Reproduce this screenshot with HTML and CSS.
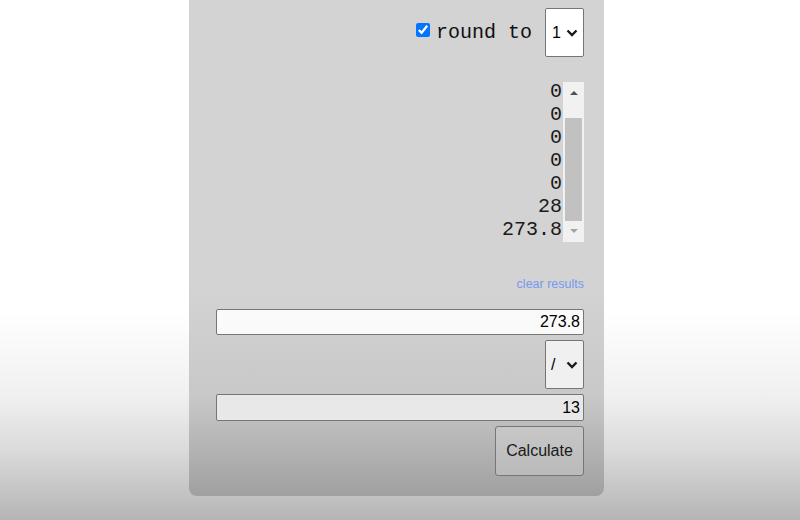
FILE: index.html
```html
<!DOCTYPE html>
<html>
<head>
<meta charset="utf-8">
<link rel="stylesheet" href="styles.css">
</head>
<body>
<div class="page">
  <div class="panel">
    <div class="round-row">
      <label class="round-label"><input type="checkbox" class="chk" checked><span class="round-text">round to</span></label>
      <div class="sel-wrap">
        <select class="sel sel-round"><option>1</option></select>
        <svg class="chev" width="12" height="8" viewBox="0 0 12 8"><path d="M1.5 1.5 L6 6 L10.5 1.5" fill="none" stroke="#1a1a1a" stroke-width="2.4"/></svg>
      </div>
    </div>
    <div class="results">
      <div class="results-text">
        <div>0</div>
        <div>0</div>
        <div>0</div>
        <div>0</div>
        <div>0</div>
        <div>28</div>
        <div>273.8</div>
      </div>
      <div class="scrollbar">
        <div class="sb-top"><span class="tri-up"></span></div>
        <div class="sb-thumb"></div>
        <div class="sb-bottom"><span class="tri-down"></span></div>
      </div>
    </div>
    <div class="clear-row"><a class="clear" href="#">clear results</a></div>
    <input class="num num-a" type="text" value="273.8">
    <div class="op-row">
      <div class="sel-wrap">
        <select class="sel sel-op"><option>/</option></select>
        <svg class="chev" width="12" height="8" viewBox="0 0 12 8"><path d="M1.5 1.5 L6 6 L10.5 1.5" fill="none" stroke="#1a1a1a" stroke-width="2.4"/></svg>
      </div>
    </div>
    <input class="num num-b" type="text" value="13">
    <div class="btn-row"><button class="calc">Calculate</button></div>
  </div>
</div>
</body>
</html>
```
FILE: styles.css
```css
html, body {
  margin: 0;
  padding: 0;
}
body {
  height: 520px;
  overflow: hidden;
  background: linear-gradient(to bottom, #ffffff 0%, #ffffff 60%, #f0f0f0 76%, #dcdcdc 86%, #c0c0c0 96%, #b5b5b5 100%);
  font-family: "Liberation Sans", Arial, sans-serif;
}
.page {
  padding-left: 189px;
}
.panel {
  width: 415px;
  box-sizing: border-box;
  padding: 8px 20px 20px 27px;
  border-radius: 0 0 8px 8px;
  background: linear-gradient(to bottom, #d3d3d3 0%, #d3d3d3 58%, #c8c8c8 80%, #b4b4b4 90%, #a0a0a0 100%);
  display: flex;
  flex-direction: column;
}
.round-row {
  display: flex;
  justify-content: flex-end;
  align-items: center;
  height: 49px;
}
.round-label {
  display: flex;
  align-items: center;
  margin-right: 13px;
}
.chk {
  width: 14px;
  height: 14px;
  margin: 0 6px 5px 0;
}
.round-text {
  font-family: "Liberation Mono", "Courier New", monospace;
  font-size: 20px;
  color: #111;
}
.sel-wrap {
  position: relative;
  display: block;
  width: 39px;
  height: 49px;
}
.chev {
  position: absolute;
  left: 21px;
  top: 21px;
  pointer-events: none;
}
.sel {
  display: block;
  width: 39px;
  height: 49px;
  box-sizing: border-box;
  -webkit-appearance: none;
  appearance: none;
  font-family: "Liberation Sans", Arial, sans-serif;
  font-size: 16px;
  color: #000;
  border: 1px solid #767676;
  border-radius: 2px;
  padding: 0 0 0 6px;
  margin: 0;
}
.sel-round {
  background-color: #ffffff;
}
.sel-op {
  background-color: #f0f0f0;
  padding-left: 5px;
}
.results {
  margin-top: 25px;
  height: 160px;
  display: flex;
  justify-content: flex-end;
}
.results-text {
  font-family: "Liberation Mono", "Courier New", monospace;
  font-size: 20px;
  line-height: 23px;
  color: #1a1a1a;
  text-align: right;
  margin-top: -2px;
  margin-right: 1px;
}
.scrollbar {
  width: 21px;
  height: 160px;
  background: #f1f1f1;
  display: flex;
  flex-direction: column;
  align-items: center;
}
.sb-top {
  height: 36px;
  padding-top: 9px;
  box-sizing: border-box;
}
.sb-thumb {
  width: 17px;
  height: 103px;
  background: #c1c1c1;
}
.sb-bottom {
  height: 21px;
  padding-top: 8px;
  box-sizing: border-box;
}
.tri-up {
  display: block;
  width: 0;
  height: 0;
  border-left: 4px solid transparent;
  border-right: 4px solid transparent;
  border-bottom: 4px solid #505050;
}
.tri-down {
  display: block;
  width: 0;
  height: 0;
  border-left: 4px solid transparent;
  border-right: 4px solid transparent;
  border-top: 4px solid #a3a3a3;
}
.clear-row {
  margin-top: 35px;
  height: 14px;
  display: flex;
  justify-content: flex-end;
}
.clear {
  font-size: 12.5px;
  line-height: 14px;
  color: #7798ee;
  text-decoration: none;
}
.num {
  display: block;
  width: 368px;
  box-sizing: border-box;
  border: 1px solid #767676;
  border-radius: 2px;
  font-family: "Liberation Sans", Arial, sans-serif;
  font-size: 16px;
  color: #000;
  text-align: right;
  padding: 0 3px;
  margin: 0;
}
.num-a {
  margin-top: 18px;
  height: 26px;
  background: #fafafa;
}
.num-b {
  margin-top: 5px;
  height: 27px;
  background: #e8e8e8;
}
.op-row {
  margin-top: 5px;
  display: flex;
  justify-content: flex-end;
}
.btn-row {
  margin-top: 5px;
  display: flex;
  justify-content: flex-end;
}
.calc {
  width: 89px;
  height: 50px;
  border: 1px solid #767676;
  border-radius: 3px;
  background: rgba(220, 220, 220, 0.35);
  font-family: "Liberation Sans", Arial, sans-serif;
  font-size: 16px;
  color: #1a1a1a;
  padding: 0;
}
```
